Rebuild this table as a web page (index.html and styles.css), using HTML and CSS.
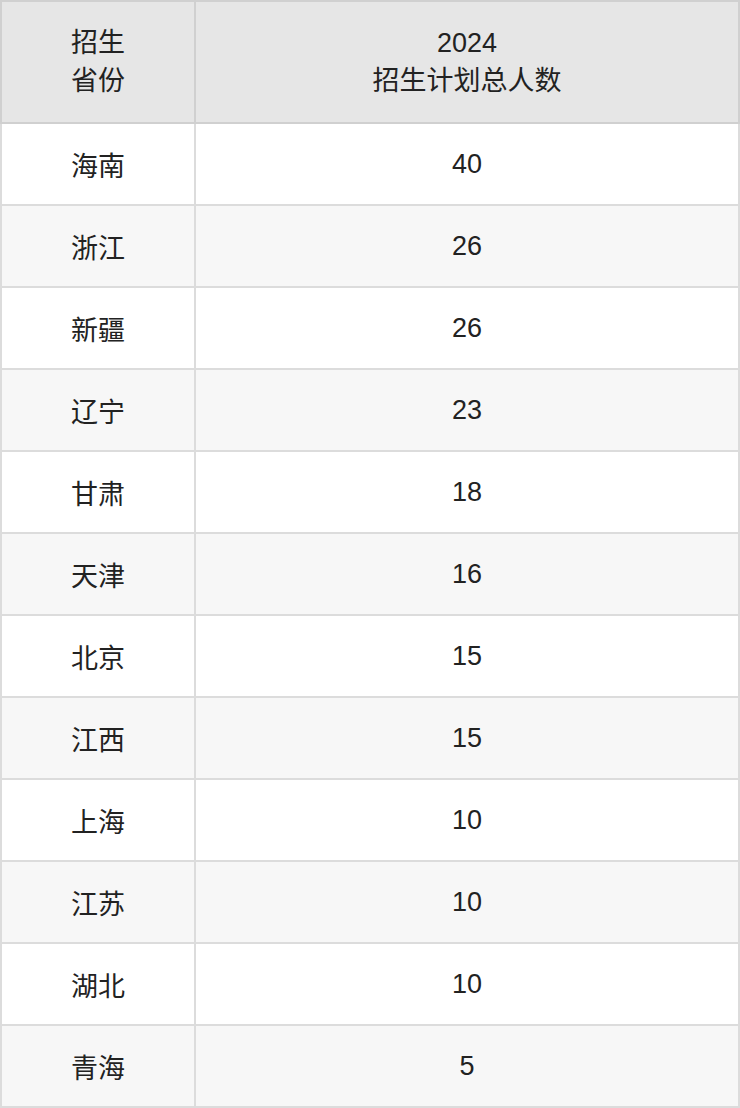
FILE: index.html
```html
<!DOCTYPE html>
<html lang="zh">
<head>
<meta charset="utf-8">
<link rel="stylesheet" href="styles.css">
</head>
<body>
<table class="plan">
  <thead>
    <tr><th class="c1">招生<br>省份</th><th class="c2">2024<br>招生计划总人数</th></tr>
  </thead>
  <tbody>
    <tr><td>海南</td><td>40</td></tr>
    <tr><td>浙江</td><td>26</td></tr>
    <tr><td>新疆</td><td>26</td></tr>
    <tr><td>辽宁</td><td>23</td></tr>
    <tr><td>甘肃</td><td>18</td></tr>
    <tr><td>天津</td><td>16</td></tr>
    <tr><td>北京</td><td>15</td></tr>
    <tr><td>江西</td><td>15</td></tr>
    <tr><td>上海</td><td>10</td></tr>
    <tr><td>江苏</td><td>10</td></tr>
    <tr><td>湖北</td><td>10</td></tr>
    <tr><td>青海</td><td>5</td></tr>
  </tbody>
</table>
</body>
</html>
```
FILE: styles.css
```css
html, body { margin: 0; padding: 0; background: #fff; }
.plan {
  width: 740px;
  border-collapse: collapse;
  font-family: "Liberation Sans", "Noto Sans CJK SC", sans-serif;
  font-size: 27px;
  color: #222;
  table-layout: fixed;
}
.plan th, .plan td {
  border: 2px solid #dcdcdc;
  text-align: center;
  vertical-align: middle;
  padding: 0;
  font-weight: normal;
}
.plan th {
  background: #e6e6e6;
  border-color: #d0d0d0;
  height: 120px;
  line-height: 38px;
}
.plan .c1 { width: 192px; }
.plan td { height: 80px; }
.plan tbody tr:nth-child(even) td { background: #f7f7f7; }
```
